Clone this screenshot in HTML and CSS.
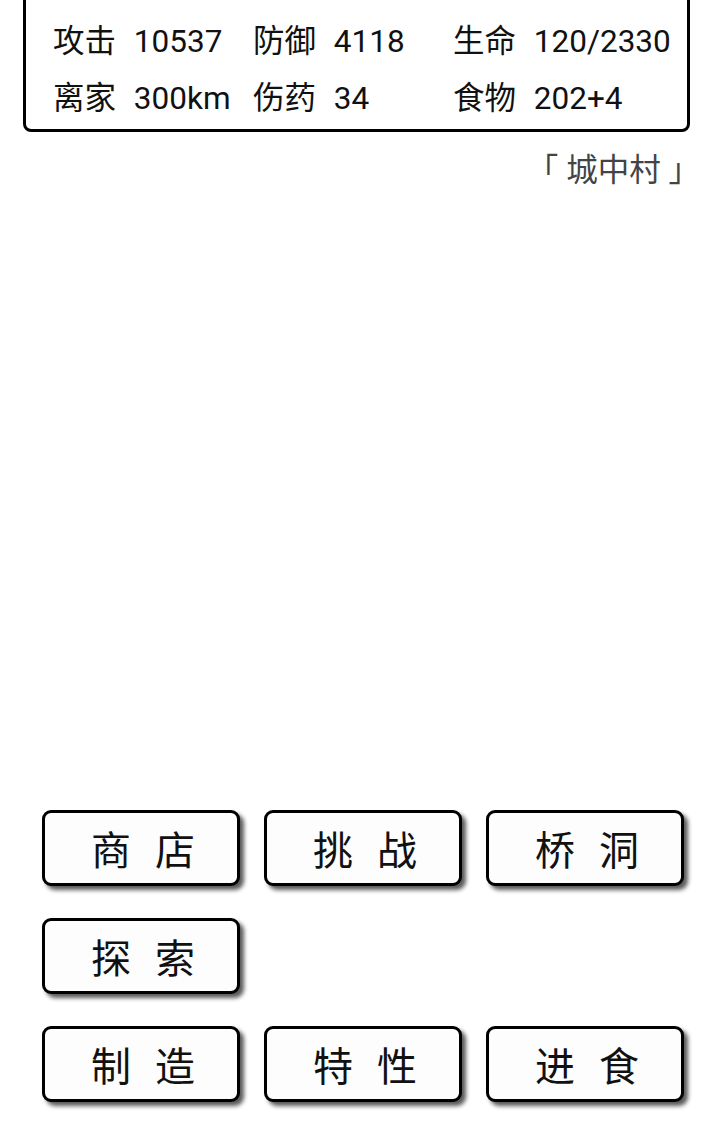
FILE: index.html
```html
<!DOCTYPE html>
<html lang="zh">
<head>
    <meta charset="UTF-8">
    <title>城中村</title>
    <link rel="stylesheet" href="styles.css">
</head>
<body>

<div class="pagina">
    <div class="estado">
        <div class="fila">
            <span class="dato"><b>攻击</b> 10537</span>
            <span class="dato"><b>防御</b> 4118</span>
            <span class="dato"><b>生命</b> 120/2330</span>
        </div>
        <div class="fila">
            <span class="dato"><b>离家</b> 300km</span>
            <span class="dato"><b>伤药</b> 34</span>
            <span class="dato"><b>食物</b> 202+4</span>
        </div>
    </div>

    <div class="lugar">「 城中村 」</div>

    <div class="botonera">
        <button><span>商</span><span>店</span></button>
        <button><span>挑</span><span>战</span></button>
        <button><span>桥</span><span>洞</span></button>
        <button><span>探</span><span>索</span></button>
        <div></div>
        <div></div>
        <button><span>制</span><span>造</span></button>
        <button><span>特</span><span>性</span></button>
        <button><span>进</span><span>食</span></button>
    </div>
</div>

</body>
</html>
```

FILE: styles.css
```css
html, body {
    margin: 0;
    padding: 0;
    background: #fff;
}
body {
    font-family: Roboto, "Noto Sans CJK SC", sans-serif;
    color: #111;
    overflow: hidden;
}
.pagina {
    height: 1123px;
    display: flex;
    flex-direction: column;
    box-sizing: border-box;
    padding-bottom: 21px;
}
.estado {
    margin: -10px 30px 0 23px;
    border: 3px solid #000;
    border-radius: 8px;
    padding: 20px 0 2px 27px;
}
.fila {
    display: grid;
    grid-template-columns: 200px 200px auto;
    height: 57px;
    line-height: 57px;
    font-size: 31.5px;
}
.dato b {
    font-weight: normal;
    margin-right: 10px;
}
.lugar {
    align-self: flex-end;
    margin: 14px 20px 0 0;
    font-size: 31.5px;
    line-height: 50px;
    color: #444;
}
.botonera {
    margin-top: auto;
    margin-left: 42px;
    display: grid;
    grid-template-columns: repeat(3, 198px);
    grid-auto-rows: 76px;
    column-gap: 24px;
    row-gap: 32px;
}
button {
    display: flex;
    align-items: center;
    justify-content: center;
    gap: 24px;
    background: #fdfdfd;
    border: 3px solid #000;
    border-radius: 9px;
    box-shadow: 4px 4px 4px rgba(0,0,0,0.65);
    font-family: "Noto Sans CJK SC", sans-serif;
    font-size: 40px;
    color: #111;
    padding: 0 0 0 4px;
    cursor: pointer;
}
```
